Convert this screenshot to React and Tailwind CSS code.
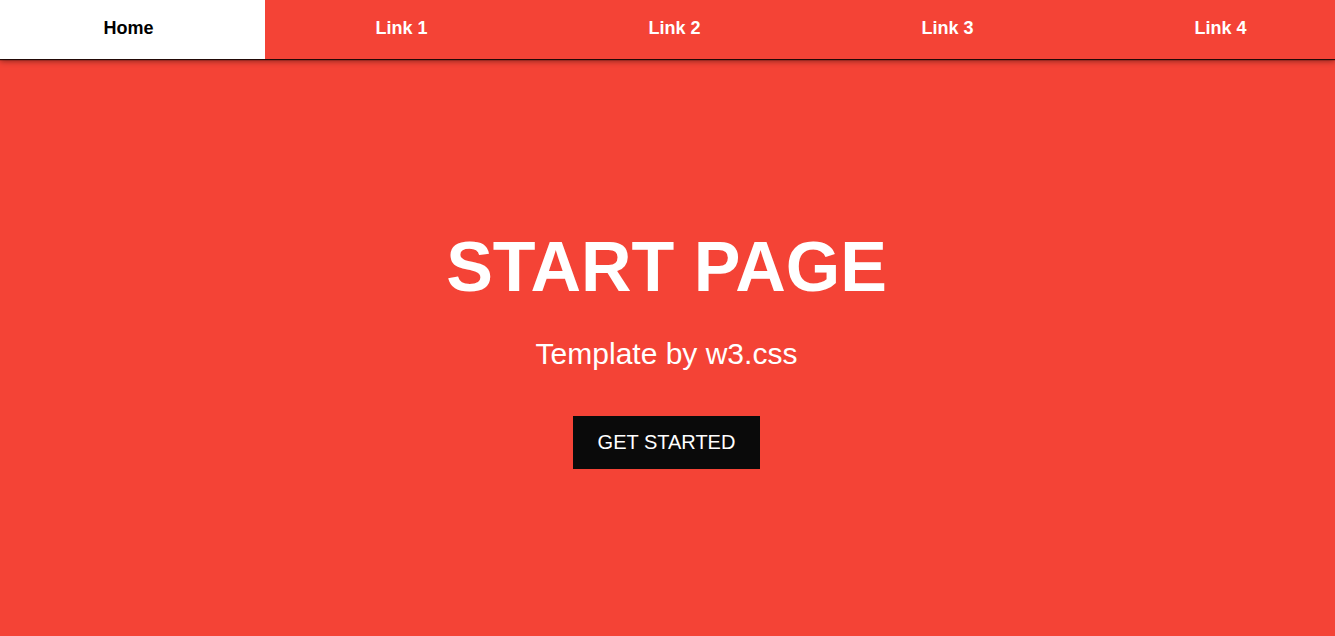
export default function App() {
  const links = ["Link 1", "Link 2", "Link 3", "Link 4"];

  return (
    <div className="min-h-screen w-full overflow-hidden bg-[#f44336] font-['Liberation_Sans',Arial,sans-serif]">
      <nav className="relative z-10 flex h-[59px] bg-[#f44336] text-[18px] font-bold shadow-[0_1px_1px_rgba(0,0,0,0.8),0_2px_6px_rgba(0,0,0,0.45)]">
        <a
          href="#"
          className="flex w-[265px] shrink-0 items-center justify-center bg-white pr-2 pb-[2px] text-black"
        >
          Home
        </a>
        {links.map((link) => (
          <a
            key={link}
            href="#"
            className="flex w-[273px] shrink-0 items-center justify-center pb-[2px] text-white"
          >
            {link}
          </a>
        ))}
      </nav>

      <header className="flex flex-col items-center pt-[173px] pr-[2px] text-center text-white">
        <h1 className="text-[70px] font-bold leading-none">START PAGE</h1>
        <p className="mt-[37px] text-[30px] leading-none">Template by w3.css</p>
        <button className="mt-[47px] bg-[#0a0a0a] px-[25px] py-3 text-[20px] leading-[29px] text-white">
          GET STARTED
        </button>
      </header>
    </div>
  );
}
